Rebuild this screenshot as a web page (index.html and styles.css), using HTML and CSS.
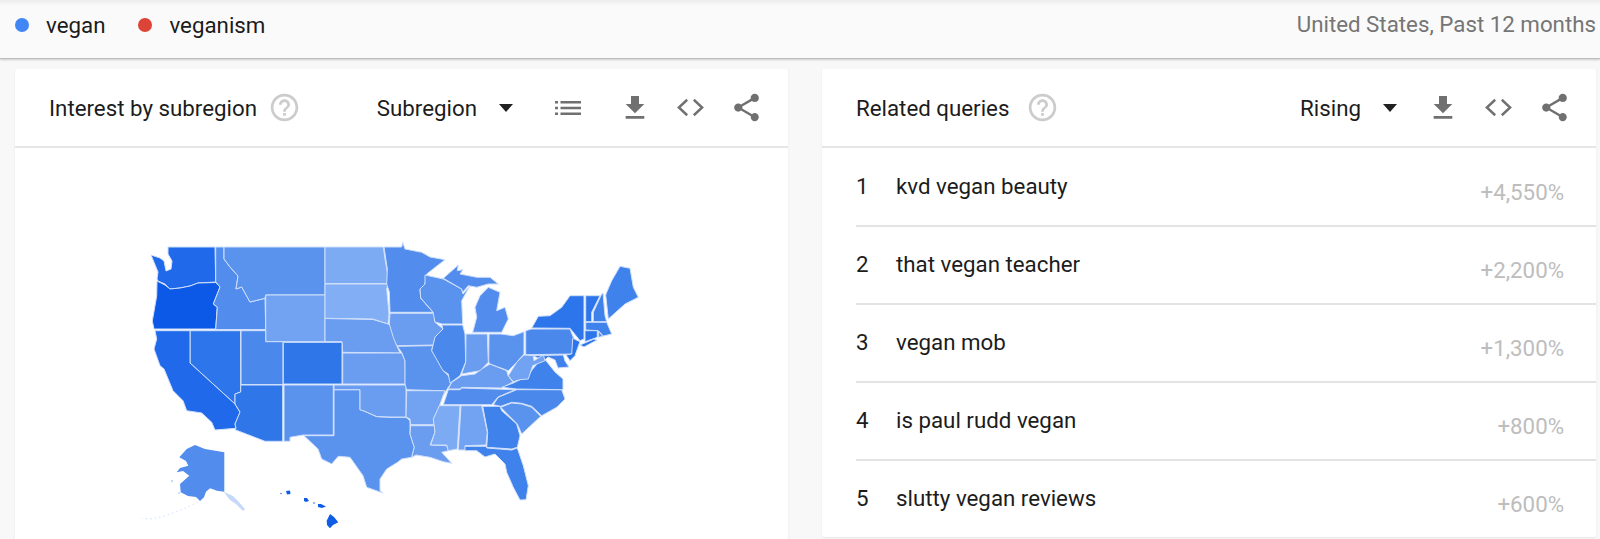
FILE: index.html
```html
<!DOCTYPE html>
<html lang="en">
<head>
<meta charset="utf-8">
<title>Google Trends: vegan vs veganism</title>
<link rel="stylesheet" href="styles.css">
</head>
<body>
<svg class="defs" width="0" height="0" aria-hidden="true">
  <symbol id="i-help" viewBox="0 0 24 24"><path d="M11 18h2v-2h-2v2zm1-16C6.48 2 2 6.48 2 12s4.48 10 10 10 10-4.48 10-10S17.52 2 12 2zm0 18c-4.41 0-8-3.59-8-8s3.59-8 8-8 8 3.59 8 8-3.59 8-8 8zm0-14c-2.21 0-4 1.79-4 4h2c0-1.1.9-2 2-2s2 .9 2 2c0 2-3 1.75-3 5h2c0-2.25 3-2.5 3-5 0-2.21-1.79-4-4-4z"/></symbol>
  <symbol id="i-dl" viewBox="0 0 24 24"><path d="M19 9h-4V3H9v6H5l7 7 7-7zM5 18v2h14v-2H5z"/></symbol>
  <symbol id="i-code" viewBox="0 0 28 28"><path class="code-line" d="M11 7 L3.5 14 L11 21 M17 7 L24.5 14 L17 21"/></symbol>
  <symbol id="i-share" viewBox="0 0 24 24"><path d="M18 16.08c-.76 0-1.44.3-1.96.77L8.91 12.7c.05-.23.09-.46.09-.7s-.04-.47-.09-.7l7.05-4.11c.54.5 1.25.81 2.04.81 1.66 0 3-1.34 3-3s-1.34-3-3-3-3 1.34-3 3c0 .24.04.47.09.7L8.04 9.81C7.5 9.31 6.79 9 6 9c-1.66 0-3 1.34-3 3s1.34 3 3 3c.79 0 1.5-.31 2.04-.81l7.12 4.16c-.05.21-.08.43-.08.65 0 1.61 1.31 2.92 2.92 2.92 1.61 0 2.92-1.31 2.92-2.92s-1.31-2.92-2.92-2.92z"/></symbol>
  <symbol id="i-list" viewBox="0 0 26 16"><path d="M0 1h3v2.4H0zM5.5 1H26v2.4H5.5zM0 6.8h3v2.4H0zM5.5 6.8H26v2.4H5.5zM0 12.6h3V15H0zM5.5 12.6H26V15H5.5z"/></symbol>
</svg>

<header class="topbar">
  <div class="legend">
    <span class="term"><i class="dot dot-blue"></i>vegan</span>
    <span class="term"><i class="dot dot-red"></i>veganism</span>
  </div>
  <div class="scope">United States, Past 12 months</div>
</header>

<main class="cards">
  <section class="card card-map">
    <div class="card-head">
      <h2 class="card-title">Interest by subregion</h2>
      <svg class="ic-help"><use href="#i-help"/></svg>
      <div class="select select-sub">Subregion<span class="caret"></span></div>
      <svg class="ic ic-list"><use href="#i-list"/></svg>
      <svg class="ic ic-dl"><use href="#i-dl"/></svg>
      <svg class="ic ic-code"><use href="#i-code"/></svg>
      <svg class="ic ic-share"><use href="#i-share"/></svg>
    </div>
    <div class="map-wrap">
      <svg class="map" viewBox="15 147 773 392" role="img" aria-label="US map of interest by subregion">
        <g class="states">
          <path class="s9" d="M168 248L215 248L215.7 283L198 284L190 287L180 289L170 290L165 285L158 282L157 280L158 273L151 256L160 259L164 262L166 272L171 270L172 262L168 255Z"/>
          <path class="s10" d="M157 282L165 286L170 290L180 289L190 287L198 284L215.7 283.5L220 288L213.3 305L217.3 308.3L215.7 330L154 330L152.3 322L156.7 297Z"/>
          <path class="s5" d="M215.7 248L224 248L224 260L230 268L238 277L236 290L241.7 288L250 303L265 299.3L265.7 330.5L215.7 330.5L217.3 308L213.3 305L220 288L215.7 283Z"/>
          <path class="s4" d="M224 248L325 248L325 296L265.7 296L265 299.3L250 303L241.7 288L236 290L238 277L230 268L224 260Z"/>
          <path class="s2" d="M265.7 296L325 296L325 342.7L265.7 342.7Z"/>
          <path class="s1" d="M325 248L383.3 248L385 260L389.3 284.5L325 284.5Z"/>
          <path class="s0" d="M325 285L388 285L386.7 290L389 315L388 325L373 320L325 319.3Z"/>
          <path class="s3" d="M325 319.5L373 320.5L388 325L391 327L396.7 346.7L400 354L342.7 353.3L342 342.7L325 342.7Z"/>
          <path class="s8" d="M190 331.7L240.5 331.7L240.7 385L240.7 393L235 395L235 405L190 364Z"/>
          <path class="s9" d="M155 331.7L190 331.7L190 364L235 405L240 413.3L235 425L236 429.3L215 431L211.7 423.3L201.7 414L186.7 411.7L183 401.7L173 391.7L164 370L160 366.7L154 350L156.7 340Z"/>
          <path class="s6" d="M241 331.7L265.7 331.7L265.7 342.7L283 342.7L283 385.5L241 385.5Z"/>
          <path class="s7b" d="M283.3 343.3L342 343.3L342 385L283.3 385Z"/>
          <path class="s7b" d="M240.7 386L282.7 386L282.7 442.3L265 442.3L235 430.7L236 429.3L235 425L240 413L235 405L235 395L240.7 393Z"/>
          <path class="s4" d="M284 386L333.3 386L333.3 436L303.3 436L290 438.3L290 442.3L284 442.3Z"/>
          <path class="s4" d="M334 390.7L360 390.7L360 410.7L364 412L376.7 417.7L390 418.3L406 418.3L410 421.7L410 435L414.3 448.3L411.7 458.3L401.7 460L398 463L386.7 470L380 480L380 491.7L382.7 494L366.7 488.3L363 476.7L350 458.3L338.3 457.3L331.7 465L321.7 460L318 450L304 436.7L334 436.7Z"/>
          <path class="s3" d="M334 386L406 386L406 418L390 418L376.7 417.5L364 412L360 410.7L360 390.7L334 390.7Z"/>
          <path class="s3" d="M342.7 354L401.7 354L405 361.7L405.3 385L342.7 385Z"/>
          <path class="s5" d="M384 248L401.7 248L402.7 243.3L405 250L421.7 253.3L430 258L445 260.7L426.7 275L425 285L420 290L420.7 299.3L433 313.3L390 313.3L389.3 293L386.7 285L387.3 270Z"/>
          <path class="s3" d="M390 314.3L434 314.3L435 323.3L443.3 330L441.7 336.7L435 338.3L433.3 346L396.7 346.7L393.3 338.3L389.3 325Z"/>
          <path class="s4" d="M397.3 347.3L432.7 346.7L431.7 351.7L440 363.3L443.3 371.7L448.3 376.7L451.7 383.3L446.7 390.7L443.3 396.7L441.7 391.7L406.7 390.7L405 385L405 362L402 354Z"/>
          <path class="s2" d="M406.7 391.7L445 391.7L443 397L438.3 410L433.3 420L434.3 425.7L410.7 425.7L410 420L406 418Z"/>
          <path class="s3" d="M410.7 426.7L434.3 426.7L435 433.3L430 446L446.7 446.7L448.3 451.7L441.7 453.3L451.7 464.3L443.3 462.7L430 458.3L416 456L411.7 458.3L414.3 448.3L410 435Z"/>
          <path class="s1" d="M439.3 406.7L460 406.7L457.3 450L448.3 451.7L446.7 446L430.7 446L435 433L433.3 420Z"/>
          <path class="s2" d="M461 406.7L481.7 406.7L487.3 433.3L486 446L465 446.7L466 451L458.3 451Z"/>
          <path class="s7" d="M482.7 407.3L500 407.3L501.7 411.7L516.7 425L520 436.7L517.3 448.3L511.7 450L486.7 448.3L487.7 433.3Z"/>
          <path class="s7" d="M465 447.3L486 447.3L487 449L511.7 451L517.3 449L523.3 466.7L528.3 486.7L526 500.7L520 501L513.3 488.3L506.7 473.3L505 465L495 455L485 458L476.7 451.7L465 451.7Z"/>
          <path class="s4" d="M500.7 408.3L511.7 404L521.7 405L531.7 408.3L540.7 417.3L521.7 435L517.3 425Z"/>
          <path class="s6" d="M516.7 390.7L561.7 390.7L565 400L556.7 408.3L541.7 416.7L531.7 407.3L521.7 404.3L511.7 403.3L500.7 407.3L493.3 405.7L498.3 398.3Z"/>
          <path class="s5" d="M443.3 405.7L491.7 405.7L498 398L515 390.7L461.7 389L460 390.7L448.3 390.7Z"/>
          <path class="s3" d="M451.7 383.3L461.7 376.7L475 375L481.7 370L490 365L506.7 371.7L508 376.7L513 383L501.7 389L461.7 388.3L460 390L448.3 390Z"/>
          <path class="s6" d="M441.7 326L462.7 326L465 335L465.7 363L460 376.7L450 384L448.3 375L443 371.7L431.7 351.7L435 338L443 330Z"/>
          <path class="s4" d="M425 276L443.3 280L461.7 290L463 295L470 286.7L461.7 301.7L462.7 325L442.3 325L435 323L433 313L420.7 299L420 290L425 285Z"/>
          <path class="s5" d="M443.3 279.3L458.3 266L457.3 271.7L463 270.7L460 275L476.7 278.3L490 278.3L498.3 285L488.3 285L476.7 288.3L468.3 286.7L462.7 293.3L461.7 290Z"/>
          <path class="s5" d="M488.3 288.3L500 293.3L496.7 311.7L505 308.3L508.3 320L501.7 333.3L472.7 333.3L476.7 318.3L475 308.3L480 296.7Z"/>
          <path class="s3" d="M466 335L487.3 335L488.3 363.3L480 371.7L461.7 375L465.7 363Z"/>
          <path class="s4" d="M489 335L500.7 335L513.3 336.7L524 332.7L524 355L516.7 363.3L508.3 371.7L490 365L488.7 363Z"/>
          <path class="s6" d="M525.7 331.7L531.7 330L570 330L573.3 338.3L578.3 343.3L571.7 355L525.7 355.7Z"/>
          <path class="s8" d="M531.7 329L538.3 317.3L550 316.7L561.7 308.3L570 296.7L584 296.7L584 340L580 341.7L570 329.3Z"/>
          <path class="s8" d="M580 346L594 340L597 341L584 348Z"/>
          <path class="s8" d="M585.7 296.7L600 296.7L591.7 313.3L591.7 322.7L585.7 322.7Z"/>
          <path class="s7" d="M601.7 295L603 294L605 316.7L606.7 322.7L593.3 322.7L593.3 313.3Z"/>
          <path class="s7" d="M606.7 293.3L611.7 281.7L620 267.3L630 269.3L633.3 288.3L638.3 298.3L625 305L608.3 320L605.7 296Z"/>
          <path class="s7" d="M585.7 323.3L606.7 323.3L611.7 335L603.3 337L598.3 331.7L585.7 331Z"/>
          <path class="s8" d="M585 331.7L597.3 331.7L597.3 338.3L585 342.7Z"/>
          <path class="s6" d="M598.7 332.3L602.7 337.3L598.7 338.3Z"/>
          <path class="s8" d="M572.7 339.3L580 342.7L576.7 351.7L575 356.7L570 361.7L566 356L571.7 355Z"/>
          <path class="s7" d="M525.7 356.7L563.3 356L565 362L569 368L558 369L555 361L548 358L544 362L533.7 357Z"/>
          <path class="s7" d="M501.7 388.3L513.3 384L528.3 376.7L532.7 370L543 358L555 373L563 380L563 390.7L516.7 390Z"/>
          <path class="s2" d="M524 356L533.3 356.7L534 361.7L543.3 356L545 361.7L532.7 366.7L528.3 380L520 380.7L513.3 382.7L508.3 376.7L516.7 363.3Z"/>
          <path class="s5 ak" d="M195 446L205 450L224.3 453.3L224.3 492.7L217 491.7L210 489.3L206 492.7L204 498.3L200 502L196 498L188 497L180.7 493.3L180 485L189.3 476.7L183 472L176.7 473.3L180 469L188.3 466.7L186 462L179.3 458.3L186.7 450Z"/>
        </g>
        <g class="faint">
          <path d="M224 492.7L233 497L238 502L245 510L243 512L236 505L230 501L226 496Z"/>
          <path class="island" d="M198 503L184 510L165 517L150 520L142 519"/>
          <circle cx="172" cy="482" r="1.2"/>
          <circle cx="179" cy="494" r="1"/>
        </g>
        <g class="hawaii">
          <path d="M330 515L334 518L338.3 523.3L333 526L330 529.3L327 526L326.7 521.7Z"/>
          <path d="M286 492L290 491.5L290.5 495L287 495.5Z"/>
          <path d="M304 499L307 499L309 502L306 503L304 502Z"/>
          <path d="M318 505L321 505L326 507.5L322 509L318 508Z"/>
          <circle cx="314" cy="504" r="0.8"/>
          <circle cx="281" cy="494.5" r="0.7"/>
        </g>
      </svg>
    </div>
  </section>

  <section class="card">
    <div class="card-head">
      <h2 class="card-title">Related queries</h2>
      <svg class="ic-help ic-help-r"><use href="#i-help"/></svg>
      <div class="select select-rising">Rising<span class="caret"></span></div>
      <svg class="ic ic-dl"><use href="#i-dl"/></svg>
      <svg class="ic ic-code"><use href="#i-code"/></svg>
      <svg class="ic ic-share"><use href="#i-share"/></svg>
    </div>
    <ol class="queries">
      <li class="query"><span class="num">1</span><span class="q">kvd vegan beauty</span><span class="val">+4,550%</span></li>
      <li class="query"><span class="num">2</span><span class="q">that vegan teacher</span><span class="val">+2,200%</span></li>
      <li class="query"><span class="num">3</span><span class="q">vegan mob</span><span class="val">+1,300%</span></li>
      <li class="query"><span class="num">4</span><span class="q">is paul rudd vegan</span><span class="val">+800%</span></li>
      <li class="query"><span class="num">5</span><span class="q">slutty vegan reviews</span><span class="val">+600%</span></li>
    </ol>
  </section>
</main>
</body>
</html>
```
FILE: styles.css
```css
* { box-sizing: border-box; }
html, body { margin: 0; height: 539px; overflow: hidden; }
body {
  background: #f8f8f8;
  font-family: Roboto, "Liberation Sans", sans-serif;
  font-size: 22.3px;
  color: #1c1c1c;
}
.defs { display: block; height: 0; }

.topbar {
  height: 59px;
  background: linear-gradient(#ececec 0, #fafafa 6px);
  border-bottom: 1px solid #bdbdbd;
  box-shadow: 0 1px 2px rgba(0,0,0,.18);
  display: flex;
  justify-content: space-between;
  align-items: flex-start;
  padding: 12px 4px 0 15px;
}
.legend { display: flex; gap: 33px; }
.term { display: flex; align-items: center; height: 26px; }
.dot { width: 14px; height: 14px; border-radius: 50%; margin-right: 17px; }
.dot-blue { background: #4285f4; }
.dot-red { background: #db4437; }
.scope { color: #757575; line-height: 24px; }

.cards {
  display: grid;
  grid-template-columns: 773px 774px;
  column-gap: 34px;
  align-items: start;
  padding: 10px 0 0 15px;
}
.card {
  background: #fff;
  height: 468px;
  border-radius: 2px;
  box-shadow: 0 1px 2px rgba(0,0,0,.08);
  overflow: hidden;
}
.card-map { height: 472px; }
.card-head {
  height: 79px;
  border-bottom: 2px solid #e6e6e6;
  display: flex;
  align-items: center;
  padding: 0 25px 0 34px;
}
.card-title { margin: 0; font-size: 22.3px; font-weight: 400; color: inherit; }
.ic-help { width: 33px; height: 33px; fill: #ccc; margin-left: 11px; flex: none; }
.ic-help-r { margin-left: 17px; }
.select { margin-left: auto; display: flex; align-items: center; }
.caret {
  width: 0; height: 0;
  border-left: 7px solid transparent;
  border-right: 7px solid transparent;
  border-top: 8px solid #212121;
  margin-left: 22px;
  margin-top: 1px;
}
.select-sub { margin-right: 42px; }
.select-rising { margin-right: 30px; }
.ic { fill: #707070; flex: none; }
.ic-list { width: 26px; height: 16px; margin-right: 38px; }
.ic-dl { width: 32px; height: 32px; margin-right: 24px; }
.ic-code { width: 31px; height: 31px; margin-right: 24px; }
.ic-share { width: 33px; height: 33px; }
.code-line { fill: none; stroke: #707070; stroke-width: 2.2; }

.map-wrap { height: 393px; }
.map { display: block; width: 773px; height: 392px; margin-top: -2px; }
.states path { stroke: #cfdffb; stroke-width: 1; stroke-linejoin: round; }
.states .ak { stroke: none; }
.s0 { fill: #81aef4; }
.s1 { fill: #7cabf3; }
.s2 { fill: #72a3f2; }
.s3 { fill: #6a9cf0; }
.s4 { fill: #5a93ee; }
.s5 { fill: #528dee; }
.s6 { fill: #4a88ec; }
.s7 { fill: #3f82ec; }
.s7b { fill: #2f77e9; }
.s8 { fill: #2d75ea; }
.s9 { fill: #1f69ea; }
.s10 { fill: #0b59e6; }
.faint path, .faint circle { fill: #c6d9fa; }
.faint .island { fill: none; stroke: #d0e0fb; stroke-width: 1; stroke-dasharray: 1.5 3; }
.hawaii path, .hawaii circle { fill: #0f5de7; }

.queries { list-style: none; margin: 0; padding: 1px 0 0 34px; }
.query {
  height: 78px;
  border-bottom: 2px solid #e3e3e3;
  display: flex;
  padding-right: 32px;
}
.query:last-child { border-bottom: 0; }
.num { width: 40px; padding-top: 25px; line-height: 24px; }
.q { flex: 1; padding-top: 25px; line-height: 24px; }
.val { color: #bdbdbd; padding-top: 31px; line-height: 24px; }
```
